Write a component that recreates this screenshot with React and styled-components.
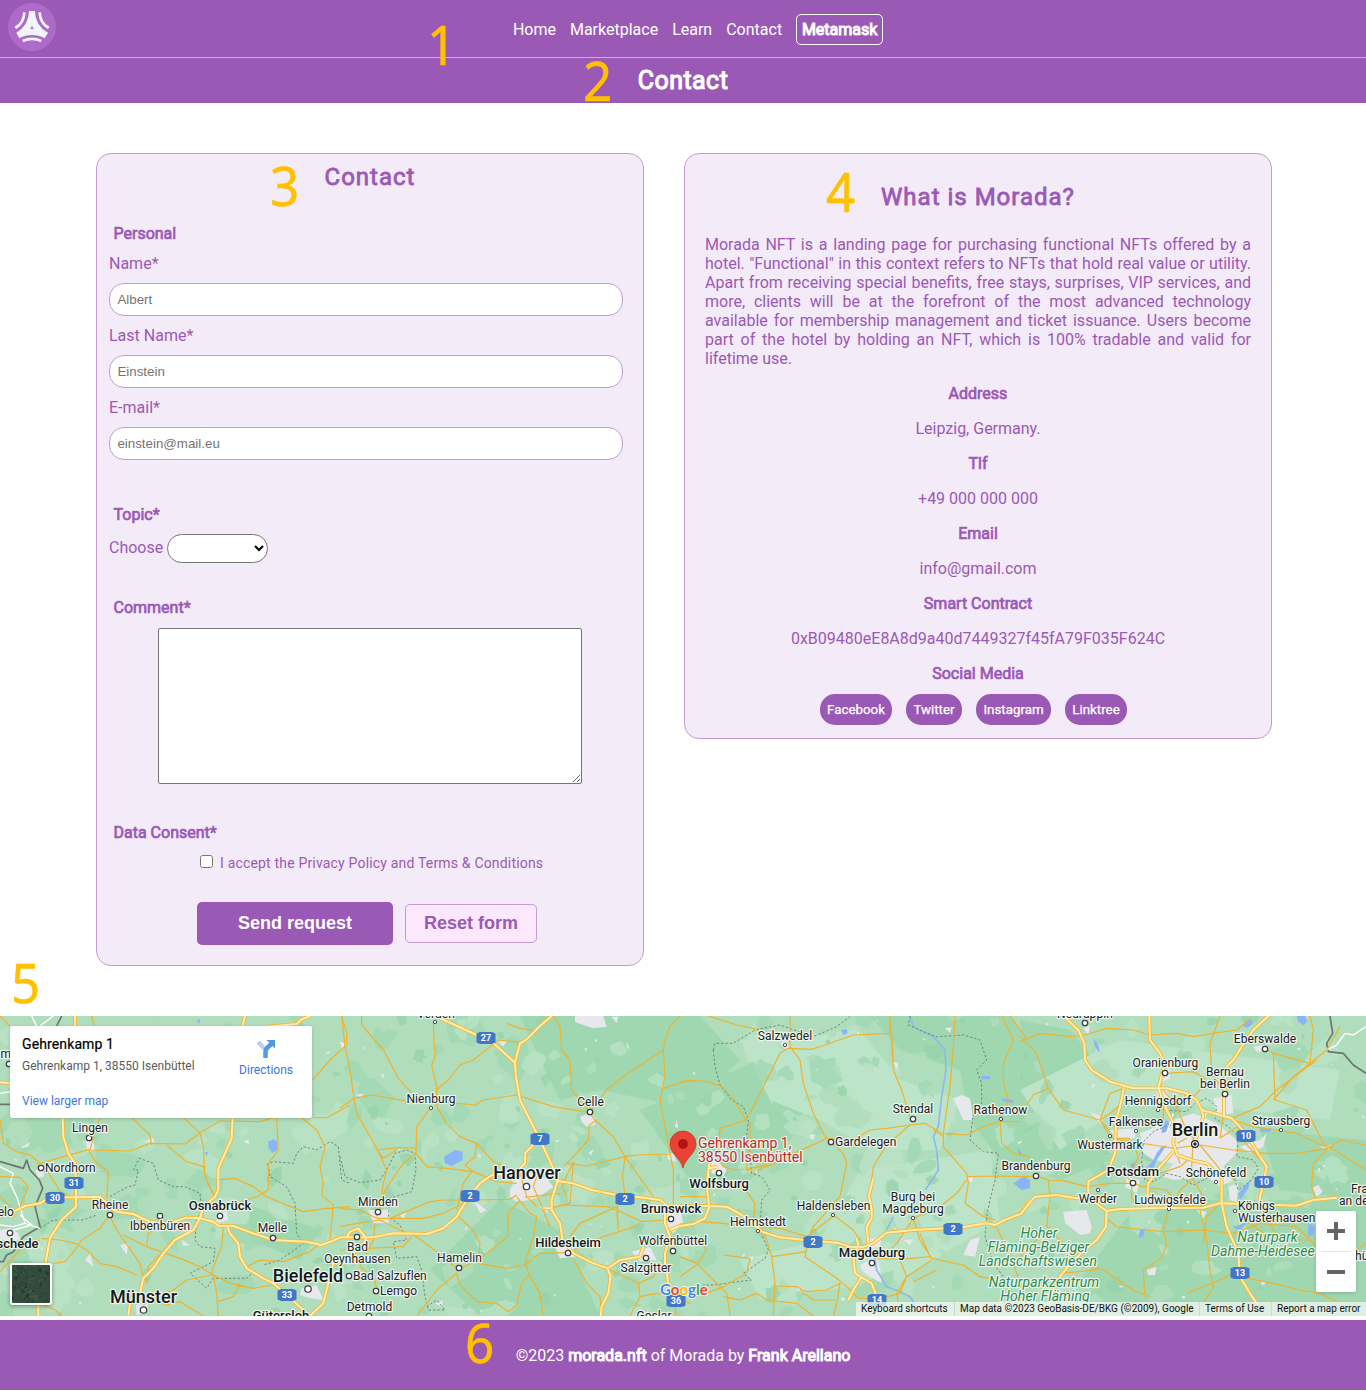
import React from 'react';
import styled, { createGlobalStyle, css } from 'styled-components';

const PURPLE = '#9b59b6';
const LILAC = '#c39bd9';
const PANEL = '#f3ebf7';

const GlobalStyle = createGlobalStyle`
  * { box-sizing: border-box; }
  body {
    margin: 0;
    background: #fff;
    font-family: Roboto, "Liberation Sans", sans-serif;
    font-size: 16px;
    line-height: 19px;
    color: ${PURPLE};
  }
  a { color: inherit; text-decoration: none; }
  h1, h2, h3, p { margin: 0; }
`;

const heavy = css`
  font-weight: 400;
  -webkit-text-stroke: 0.7px currentColor;
`;

const Page = styled.div`
  position: relative;
  width: 1366px;
  height: 1391px;
  overflow: hidden;
`;

const Header = styled.header`
  display: flex;
  align-items: flex-start;
  height: 58px;
  padding: 0 26px 0 8px;
  background: ${PURPLE};
  border-bottom: 1px solid #d2a8e4;
`;

const Logo = styled.svg`
  display: block;
  width: 48px;
  height: 48px;
  margin-top: 3px;
`;

const Nav = styled.nav`
  flex: 1;
  display: flex;
  justify-content: center;
  align-items: center;
  gap: 14px;
  height: 59px;
  color: #fff;
`;

const WalletLink = styled.a`
  ${heavy}
  -webkit-text-stroke-width: 1px;
  width: 87px;
  height: 31px;
  padding: 5px 0;
  border: 1px solid #fff;
  border-radius: 5px;
  text-align: center;
`;

const TitleBar = styled.div`
  display: flex;
  justify-content: center;
  height: 45px;
  padding-top: 9px;
  background: ${PURPLE};
  color: #fff;
`;

const PageTitle = styled.h1`
  ${heavy}
  -webkit-text-stroke-width: 1.1px;
  font-size: 25px;
  line-height: 28px;
  letter-spacing: 0.45px;
`;

const Content = styled.main`
  display: flex;
  align-items: flex-start;
  gap: 40px;
  height: 913px;
  padding: 50px 94px 0 96px;
`;

const Card = styled.section`
  width: ${(p) => p.$width}px;
  height: ${(p) => p.$height}px;
  padding: ${(p) => p.$pad};
  background: ${PANEL};
  border: 1px solid ${LILAC};
  border-radius: 15px;
`;

const CardTitle = styled.h2`
  ${heavy}
  -webkit-text-stroke-width: 0.8px;
  font-size: 24px;
  line-height: 28px;
  letter-spacing: 1px;
  text-align: center;
`;

const Group = styled.div`
  margin-top: ${(p) => p.$top}px;
`;

const GroupTitle = styled.h3`
  ${heavy}
  margin-left: 4.5px;
  font-size: 16px;
`;

const Label = styled.label`
  display: block;
  margin-top: ${(p) => p.$top || 10}px;
`;

const TextInput = styled.input`
  display: block;
  width: 514px;
  height: 33px;
  margin-top: 10px;
  padding: 0 7.4px;
  border: 1px solid ${LILAC};
  border-radius: 15px;
  background: #fff;
  font: 13.333px "Liberation Sans", Arial, sans-serif;
  &::placeholder { color: #757575; }
`;

const TopicRow = styled.div`
  display: flex;
  align-items: flex-start;
  gap: 4px;
  margin-top: 10px;
  label { margin-top: 4px; }
`;

const TopicSelect = styled.select`
  width: 101px;
  height: 29px;
  border: 1px solid #767676;
  border-radius: 15px;
  background: #fff;
  color: #000;
`;

const CommentBox = styled.textarea`
  display: block;
  width: 424px;
  height: 156px;
  margin: 11px 0 0 49px;
  border: 1px solid #767676;
  border-radius: 2px;
  background: #fff;
`;

const Consent = styled.label`
  display: flex;
  align-items: flex-start;
  gap: 7px;
  height: 18px;
  margin: 12px 0 0 91px;
  font-size: 14px;
  letter-spacing: 0.18px;
  input { width: 13px; height: 13px; margin: 1px 0 0; }
`;

const Actions = styled.div`
  display: flex;
  align-items: center;
  gap: 12px;
  margin: 30px 0 0 88px;
`;

const FormButton = styled.button`
  width: ${(p) => (p.$primary ? 196 : 132)}px;
  height: ${(p) => (p.$primary ? 43 : 39)}px;
  padding: 0 0 1px;
  border: ${(p) => (p.$primary ? '0' : `1px solid ${LILAC}`)};
  border-radius: 5px;
  background: ${(p) => (p.$primary ? PURPLE : '#fbe8fd')};
  color: ${(p) => (p.$primary ? '#fff' : PURPLE)};
  font: bold 18px "Liberation Sans", Arial, sans-serif;
`;

const About = styled.p`
  margin-top: 24px;
  text-align: justify;
`;

const Detail = styled.p`
  margin-top: 16px;
  text-align: center;
  ${(p) => p.$strong && heavy}
`;

const Socials = styled.div`
  display: flex;
  justify-content: center;
  gap: 14px;
  margin-top: 11px;
  padding-right: 9px;
`;

const SocialLink = styled.a`
  width: ${(p) => p.$width}px;
  height: 31px;
  border-radius: 15px;
  background: ${PURPLE};
  color: #fff;
  font-size: 13.33px;
  font-weight: 400;
  -webkit-text-stroke: 0.25px #fff;
  line-height: 31px;
  text-align: center;
`;

const Marker = styled.span`
  position: absolute;
  left: ${(p) => p.$x}px;
  top: ${(p) => p.$y}px;
  font-family: "Noto Sans", "Open Sans", sans-serif;
  font-size: 55px;
  line-height: 55px;
  color: #ffc000;
  transform: scaleX(0.93);
  -webkit-text-stroke: 0.5px #ffc000;
`;

const MapFrame = styled.section`
  position: relative;
  height: 300px;
  margin-bottom: 4px;
  overflow: hidden;
`;

const MapDrawing = styled.svg`
  display: block;
  width: 1366px;
  height: 300px;
  font-family: Roboto, sans-serif;
`;

const PlaceCard = styled.div`
  position: absolute;
  left: 10px;
  top: 10px;
  display: flex;
  justify-content: space-between;
  width: 302px;
  height: 92px;
  padding: 10px 19px 9px 12px;
  background: #fff;
  border-radius: 2px;
  box-shadow: 0 1px 4px -1px rgba(0, 0, 0, 0.3);
  font-size: 12px;
  line-height: 16px;
`;

const PlaceText = styled.div`
  display: flex;
  flex-direction: column;
`;

const PlaceName = styled.div`
  color: #000;
  font-size: 14px;
  font-weight: 400;
  letter-spacing: 0.12px;
  -webkit-text-stroke: 0.2px #000;
`;

const PlaceAddress = styled.div`
  margin-top: 6px;
  color: #5b5b5b;
`;

const MapLink = styled.a`
  margin-top: ${(p) => p.$top}px;
  color: #3a76e0;
`;

const Directions = styled.div`
  display: flex;
  flex-direction: column;
  align-items: center;
  padding-top: 3px;
`;

const LayerThumb = styled.div`
  position: absolute;
  left: 10px;
  top: 247px;
  width: 42px;
  height: 42px;
  border: 2px solid #fff;
  border-radius: 3px;
  box-shadow: 0 1px 4px rgba(0, 0, 0, 0.4);
  overflow: hidden;
  svg { display: block; }
`;

const ZoomControl = styled.div`
  position: absolute;
  left: 1316px;
  top: 195px;
  width: 40px;
  height: 81px;
  border-radius: 2px;
  background: #fff;
  box-shadow: 0 1px 4px -1px rgba(0, 0, 0, 0.3);
`;

const Credits = styled.div`
  position: absolute;
  right: 0;
  bottom: 0;
  display: flex;
  height: 14px;
  background: rgba(240, 245, 241, 0.78);
  color: #111;
  font-size: 10px;
  line-height: 14px;
`;

const Credit = styled.span`
  width: ${(p) => p.$width}px;
  padding-left: 5px;
  white-space: nowrap;
  & + & { border-left: 1px solid #c8ddce; }
`;

const Footer = styled.footer`
  height: 70px;
  padding-top: 26px;
  background: ${PURPLE};
  color: #fff;
  text-align: center;
  strong { ${heavy} -webkit-text-stroke-width: 1px; }
`;

/* Deterministic generator for the woodland texture. */
const seeded = (seed) => () => {
  seed = (seed * 16807) % 2147483647;
  return seed / 2147483647;
};

const patches = (seed, count, min, max, region = [0, 1016, 1366, 1316]) => {
  const rnd = seeded(seed);
  let d = '';
  for (let i = 0; i < count; i++) {
    const cx = region[0] + rnd() * (region[2] - region[0]);
    const cy = region[1] + rnd() * (region[3] - region[1]);
    const size = min + rnd() * rnd() * (max - min);
    const flat = 0.45 + rnd() * 0.5;
    const tilt = rnd() * Math.PI;
    const n = 9 + Math.floor(rnd() * 6);
    for (let k = 0; k < n; k++) {
      const a = (k / n) * Math.PI * 2;
      const r = size * (0.6 + rnd() * 0.55);
      const px = Math.cos(a) * r;
      const py = Math.sin(a) * r * flat;
      const x = cx + px * Math.cos(tilt) - py * Math.sin(tilt);
      const y = cy + px * Math.sin(tilt) + py * Math.cos(tilt);
      d += `${k ? 'L' : 'M'}${x.toFixed(1)} ${y.toFixed(1)}`;
    }
    d += 'Z';
  }
  return d;
};

/* Four map sheets, each drawn at three times its final scale. */
const sheets = [
  {
    at: [0, 950],
    motorway:
      'M225 198V228M188 503L190 560L205 610L225 640L228 700V770L185 810L150 865L138 930V945M115 1065V1098M0 800L40 785L75 768L120 760L150 742H230L300 740L330 770L350 785L400 792L450 815L500 822L560 803L600 805L640 815L655 827L700 828L760 850L820 870L860 872L920 875L965 885L1000 872L1020 862L1050 860M735 198L728 228M698 503L695 565L675 610L655 655V720L645 740L610 770L600 805L580 840L525 870L490 910L460 955L430 985L420 1030L390 1060L385 1098M680 825L690 850L715 880L720 920L740 955L790 985L820 1000L860 1035L910 1080L925 1098M1050 925L1000 940L985 1000L970 1060L930 1098M800 230L890 222L905 208L930 198M0 397L35 400',
    road:
      'M0 198L30 228M275 198L282 228M1025 198L1040 250L1040 285L990 330L938 390M0 510L10 580L50 605L90 615L120 640L150 632L225 610L270 598L300 500M270 600L390 603L450 580L555 582L600 548L660 513L780 515L820 503M395 503L450 555L455 585M500 585L560 635L610 650L620 690L645 740M550 503L600 548L610 590L615 680L640 735M830 503L835 600L805 640V720L770 740L680 770M650 690L705 685L760 710L800 740L860 765L910 785L980 775L1050 770M905 503L950 540L975 590L960 650L970 700L965 735L1000 765L990 870M938 503L980 503L1050 465M110 640L140 660L185 730L230 745M265 600L290 640L325 665L320 745M0 680L60 682L85 710L60 770M320 780L350 840L385 890L420 940L430 985M125 865L180 870L225 880L260 900L300 940L350 950L410 975M160 940L195 935L225 900L245 870L300 835L325 800M370 855L440 890L540 925L600 950L640 975L650 1030L655 1098M440 890L445 850L500 812M670 830L665 890L640 950L635 975L560 990L520 1020L450 1050L430 1065M640 975L690 1000L760 1015L820 1005M130 1065L165 1080L185 1098M0 740L30 770L45 800M0 965L60 900L120 870M430 1040L500 1065L540 1055L610 1098M740 950L780 930L850 935L930 905L960 880M655 1055L700 1040L720 1000M520 870L445 950L440 1000',
    white:
      'M0 650L40 670L30 700L50 740L75 820L120 835M75 820L40 830L0 825M40 840L95 825L60 795M95 198L110 228M120 228L160 198M0 430L30 425',
    border: 'M185 198L170 228M0 463H30M0 635L70 655L80 630L90 660L118 690L128 715L105 770L120 830L70 860L40 905L20 915L10 935H0',
    limit:
      'M120 835L160 810H250L290 795M330 740L380 712L405 705L415 660L400 660L418 625L460 640L475 690L520 710L555 710L600 730L605 780L590 810L585 870L600 890L645 895L640 935L570 970L620 1015L640 985L740 985L765 960M800 645L820 635L880 640L890 610L910 590L950 600L990 575L1015 590L1025 690L1050 700M805 645L810 680L860 710L885 760L890 850L910 880L840 930L790 945',
    water: 'M805 575L820 568L832 575V600L818 608L806 595ZM612 608L625 605L620 618ZM590 210L600 208L598 222Z',
    town: 'M255 560L280 570L285 600L262 605ZM105 660L130 650L132 680L115 685ZM0 840L30 835L55 850L60 870H0ZM650 790L680 785L685 810L650 820ZM905 1015L950 1005L970 1050L930 1045L900 1035ZM408 1065L445 1060L440 1090L410 1095ZM60 595L90 575L85 590ZM430 575L460 565L465 578ZM730 575L745 568L748 583ZM360 885L385 880L380 915ZM545 870L570 885L550 888ZM270 910L280 950L255 930Z',
  },
  {
    at: [340, 1010],
    motorway:
      'M300 25L345 45L410 75L460 100L525 158M635 18L600 48L560 88L540 100L525 158L528 200L540 270L570 330L600 390L640 475L652 515L635 570V600L660 640L668 690L700 730L760 760L803 775L812 800L805 850L785 890L782 918M0 682H100L160 670L260 672L310 655L350 620L380 570L420 520L455 495L490 492M535 480L555 460V430L590 395M650 513L700 520L755 540L830 555L900 562L960 570L985 590L1050 588M803 775L840 750L900 740L910 710M975 600L975 640L990 680L975 730V760L985 820L1000 860M990 660L1025 645L1050 648M20 682L30 665L55 655L75 680L80 700M80 690L30 740L0 770M610 595H635',
    road:
      'M65 18V45L130 120L175 205L230 265M5 18L15 110L30 180L42 265L50 310L110 415L140 480L130 520L120 600M0 295L42 265L95 255L210 275L350 280L405 285L430 270L530 255L640 290L750 308M280 40L285 140L275 165L290 230V290M290 240L325 210L360 165L400 150L450 110L475 90L540 98M500 40L540 55L575 60L590 75M640 18L660 50L665 120L690 150L695 240L750 308L800 240L850 200L970 120L975 90L990 50L1020 18M970 120L975 200L960 270L975 350L990 430L1000 480V590M970 235L1050 210M290 290L320 340L360 380L410 400L460 455L540 490L560 560L590 590M275 290L230 350L228 430L260 470L320 475L400 485L470 515L530 520M228 415L180 412L110 420L130 445L170 420M228 430L190 460L135 540L110 620M0 595L60 600L110 625L250 625L310 610L370 580M150 625L270 575L310 570L360 570L510 568L530 555M750 310L765 330L820 380L855 440L940 560M770 330L748 345L745 390L700 440L670 470M700 455L690 580L630 595M680 460L740 468L855 440L890 435L990 432M855 440L848 500L855 560M590 500L580 530L610 600L630 650M555 562L660 550M530 560L570 610L590 620L580 680L555 760L570 800L600 850L610 918M540 570L505 610L503 680L415 750L360 775M350 615L400 660L420 700L415 760L500 775L555 765L600 730L680 728M0 650L50 640L120 630L180 660L230 680L290 725L350 775M0 720L80 715L190 710L215 680M230 918L290 840L350 790L360 825L410 875L470 880L505 905L530 885L545 820L570 790M630 600L660 585L800 590L830 600L835 660L830 560M830 600L905 635L970 630M690 680L720 640L830 590M700 720L790 680L900 645M700 745L740 820L780 860L785 918M810 780L895 820L900 860L870 918M895 820L940 800L970 760M395 485L370 520L350 600M410 400L405 440L375 465L400 485M900 860L950 850L1000 860L1050 880M1000 860L1010 918M105 640L100 690L60 770L100 800L115 850M680 555L665 530L700 455',
    white: '',
    border: '',
    limit:
      'M0 440L15 500L60 518L120 510L140 480L165 430L200 420L225 430L228 480L215 545L150 565L145 620L180 645L200 690L160 695L170 745L230 740L245 780L255 860L265 900L315 900L290 870L260 890',
    water: 'M312 440L345 420L368 425L368 450L335 468L315 460ZM135 335L145 342L138 344Z',
    town:
      'M510 540L530 500L580 490L620 505L640 530L600 560L570 570L530 575L510 560ZM600 590L625 588L622 610ZM720 320L748 310L768 325L765 345L740 350L725 335ZM705 18H790L800 50L760 55L730 45L705 35ZM975 600L1020 590L1030 640L1000 670L970 640ZM875 725L930 710L950 750L900 755ZM640 700L700 705L705 740L660 745ZM85 600L150 600L145 640L100 640ZM180 615L200 605L190 630ZM285 880L310 870L305 890ZM0 95L20 100L5 115ZM45 255L70 250L65 262ZM475 95L500 92L490 110ZM815 20L835 20L830 40ZM860 95L870 120L860 110ZM400 570L440 600L420 610ZM745 430L760 418L755 435ZM1010 330L1015 355L1005 350ZM980 430L1000 430L1010 455L985 450Z',
  },
  {
    at: [680, 1010],
    motorway:
      'M0 588H85L140 590L180 612L215 635L245 665L300 682L375 690L470 698L510 710L545 712L580 700L620 668L700 660L850 652L915 640L945 645L970 632L1020 612L1050 570M0 648L40 642L75 625L88 590L80 530L88 460M580 505L567 555L575 600L575 625L560 650L565 700M530 685L535 705L520 740L525 790L575 820L590 860V880M545 800L520 840L505 870M88 475L110 470',
    road:
      'M0 215L40 212L80 215L125 230L160 265L198 330L215 300L260 210L300 130L325 115L395 118L435 105L520 75L630 70V18M85 18L170 45L220 55L270 80L300 85M330 18V110L360 150L370 220L400 310L435 380L490 430L500 460L480 560L400 650L385 690L375 740L470 805L500 830L535 865L600 865L660 850L680 800L755 750M198 330L120 355L115 440L130 470L165 480L205 475L240 470L300 450L340 430L410 400L440 385L520 390L570 360L620 355L690 345L735 340L785 370L860 375L910 350L960 335H1020M630 18L640 180L665 240L690 320M635 70L640 155M825 18L820 110L810 230L790 370V410L860 490L865 520L855 580L910 620L945 630M965 18L1000 90L970 160V220L985 270L960 330L965 400L1000 430L1050 440M990 18L1040 85M690 345L620 405L580 470L575 510M860 500L950 498L1050 500M860 510L830 550L780 590L700 625L650 700L600 745M700 625L720 690L755 745L850 765L900 800L930 805M720 670L750 740L660 748L590 745M460 615L520 660L540 690M465 615L380 680L300 655L245 650M0 650L60 635L130 640L245 655L260 690L275 740L285 820L280 918M275 740L380 725M60 690L80 720L50 765L0 800M130 735L210 745L200 790L130 830L80 850M285 828L350 830L380 845L440 840L480 820L470 880L460 918M360 840L400 870L465 870M190 530L225 580L220 640M300 455L230 480L200 480L205 400M210 335V450M88 560H0M945 645L990 730L1010 790L1030 850M660 750L680 800L650 850L655 880M130 860L180 870L230 850L260 870L350 880L400 918M700 815L770 780M790 380L760 360M0 740L50 760L140 850L150 918',
    white: '',
    border: '',
    limit:
      'M100 120L105 100L160 100L225 60L300 45L400 80L470 50L510 20M100 120L105 170L120 225L155 270L190 290L205 330L200 380L210 430L215 490L245 500L270 540L245 570L240 660L265 720L255 745L190 790L215 810L100 825H70M690 18L685 45L730 65L770 80L850 75L900 90L920 150L890 180L905 220L905 300L880 310L870 390L910 425L955 430L945 510L930 570L920 620L915 680L940 760L970 800',
    water:
      'M485 60L500 58L503 70L488 75ZM905 198H930V208H905ZM965 265L1000 270L995 278L968 274ZM1000 520L1030 500L1050 510V535L1025 540ZM1010 410L1025 430L1020 440Z',
    town:
      'M820 265L845 255L870 265L880 330L850 330ZM540 765L590 740L600 770L605 820L570 800L545 780ZM90 460L110 450L140 480L130 500L95 490ZM560 690L605 680L600 710L570 715ZM870 690L900 680L885 740L850 735ZM640 155L655 160L650 180ZM670 690L700 688L690 705ZM200 742L220 738L218 750ZM350 835L375 835L365 850ZM220 480L235 475L230 490ZM795 55L815 52L810 68ZM225 655L245 650L245 670ZM860 505L880 500L875 520ZM300 100L315 90L330 110L315 118Z',
    river:
      'M690 18L700 50L760 80L795 120L798 180L785 260L775 350L760 380L770 420L775 480L750 520L735 540M640 620L620 660M580 720L590 780L620 830L660 845L690 860L710 890',
  },
  {
    at: [1020, 1010],
    motorway:
      'M130 18L175 60L193 100L195 150L215 180L270 215L340 235L440 235L500 250L530 270L545 300L600 315L635 325L655 345L690 390L720 440L740 470L730 520L720 560L718 582M0 615L20 590L45 560L110 555L170 565L205 560L235 585L260 603L300 597L380 595L550 593L600 580L700 583L830 587L880 570L950 563M312 232L300 290L288 330L285 430L265 480L205 515V560M260 603L258 650L230 690L160 750L120 800L90 860M605 500L605 580L620 650L655 730L660 800L690 850L710 880M745 18L700 60L665 110L640 150L620 170L612 260V315M388 18L390 90L420 130L435 160L415 235L440 300L465 350L460 400L472 435L520 452L560 460L600 500M545 300L550 320L535 370L520 400M460 425L420 470L385 520L380 590',
    road:
      'M0 95L60 70L150 80L195 75M0 80L50 130L85 235L130 300L240 330L270 310L300 285M85 235L40 255L0 315M195 75L260 55L340 60L390 75L470 70L520 80L580 70L650 60L690 30M240 330L270 380L285 388L400 405L460 415L540 405L640 420L740 430L830 430L925 415L960 390L1038 405M270 365L240 330L270 250L310 235M435 190L520 185L555 205L540 240L520 260M600 18L570 100L575 190L615 250M730 115L760 130L870 160L920 120L960 50M760 130L765 270L860 300L910 400L1038 480M925 415L880 460L875 530L890 570M635 325L720 290L770 240L890 150M640 330L700 350L830 370L925 415M600 385L660 345M540 405L610 490L650 510M285 385L330 385M472 400L500 385M470 430L480 460M470 290L490 340L520 385L515 470L520 510L550 560L540 600M430 260L430 340M420 490L480 470L510 445M340 520L370 530L440 540L465 570L460 590M340 520L310 490L270 490M335 520V560L350 595M0 500L50 498L85 510L130 512L200 530L270 520L335 520M85 510L90 560L80 650L120 690L150 720L170 760L250 780L340 840L390 860M445 600L430 660L440 700L425 745L370 780L375 860M260 625L290 650L380 660L430 665L550 660L640 670L720 640L830 650L900 720L980 740L1038 700M540 600L560 690L570 780L580 830L550 880M720 590L760 660L780 690L870 690M590 590L560 620L550 700M660 800L760 820L840 840L900 850L960 880M660 780L600 810L500 850M870 18L880 60L870 160L820 200L760 270M610 315L600 385M340 400L355 440L330 500M0 740L60 680L90 650M120 790L230 780M500 250L470 290L430 240M520 505L480 540L465 580M650 330L660 380L720 450M660 620L690 640L770 700',
    white: 'M1038 50L1000 75L975 70L950 105L920 120M460 310L440 370M560 300L540 380',
    border: 'M930 18L938 70L920 100L925 125L970 130L1000 165L1038 190',
    limit:
      'M370 395L400 365L455 340L440 300L500 305L525 280L560 265L590 290L585 325L625 350L655 380L650 440L700 450L715 475L690 515L655 540L640 500L600 480L560 505L520 525L480 500L440 490L400 515L375 510L365 460L370 395',
    water:
      'M0 505L20 500L25 520L5 540ZM375 480L400 450L410 430L425 410L440 405L410 450L395 485ZM425 350L440 330L455 345L440 365L425 370ZM720 355H755L750 365H722ZM665 45L690 25L700 40L680 55ZM830 18H855L862 35L850 45L835 35ZM865 640L885 650L880 675L865 680ZM220 85L235 105L240 130L225 110ZM655 550L690 510L685 535L660 570ZM635 650L660 645L690 630L660 660ZM360 660L375 655L370 680L355 685ZM330 465L345 455L338 480Z',
    town:
      'M360 370L460 330L520 310L590 340L650 390L650 430L610 470L640 510L600 530L560 500L460 510L430 500L460 460L400 450L370 430ZM130 605L200 600L215 650L210 670L180 675L150 650L135 640ZM580 265L635 255L640 310L590 315ZM410 240L440 240L450 265L415 290ZM430 175L450 180L450 205L425 215ZM380 780L410 770L405 795L385 795ZM875 535L895 525L908 545L890 560ZM625 530L655 520L650 575L630 570ZM700 110L730 105L735 125L710 125ZM660 410L720 390L740 370L730 410L690 430ZM320 500L360 510L350 550L315 530ZM530 600L560 605L550 625ZM270 360L350 355L345 385L290 390ZM900 410L935 405L925 420ZM190 55L210 45L205 75ZM210 305L245 320L250 350Z',
  },
];

/* text, x, baseline, style key, anchor */
const labels = [
  ['Verden', 436, 1017.5], ['Salzwedel', 785, 1040], ['Neuruppin', 1085, 1018], ['Eberswalde', 1265, 1043],
  ['Oranienburg', 1165.5, 1067], ['Bernau', 1225, 1076], ['bei Berlin', 1225, 1088], ['Nienburg', 431, 1103],
  ['Celle', 590.5, 1106], ['Stendal', 913, 1113], ['Rathenow', 1000.5, 1114], ['Hennigsdorf', 1158, 1105],
  ['Falkensee', 1136, 1126], ['Strausberg', 1281, 1125], ['Wustermark', 1110, 1149], ['Lingen', 90, 1132],
  ['Nordhorn', 45, 1172, 's', 'start'], ['Gardelegen', 835, 1146, 's', 'start'], ['Brandenburg', 1036, 1170],
  ['Schönefeld', 1216, 1177], ['Potsdam', 1133, 1176, 'm'], ['Werder', 1098, 1203], ['Ludwigsfelde', 1170, 1204],
  ['Königs', 1238, 1209.5, 's', 'start'], ['Wusterhausen', 1238, 1221.5, 's', 'start'], ['Burg bei', 913, 1201],
  ['Magdeburg', 913, 1213], ['Haldensleben', 833.5, 1210], ['Helmstedt', 758, 1226], ['Magdeburg', 872, 1256.5, 'm'],
  ['Wolfsburg', 719, 1187.5, 'm'], ['Brunswick', 671, 1212.5, 'm'], ['Wolfenbüttel', 673, 1245], ['Hildesheim', 568, 1246.5, 'm'],
  ['Salzgitter', 646, 1272], ['Hamelin', 459.5, 1262], ['Minden', 378, 1206], ['Bad', 357.5, 1251], ['Oeynhausen', 357.5, 1263],
  ['Bad Salzuflen', 353, 1280, 's', 'start'], ['Lemgo', 380, 1295, 's', 'start'], ['Detmold', 369.5, 1311], ['Rheine', 110, 1209],
  ['Ibbenbüren', 160, 1230], ['Osnabrück', 220, 1209.5, 'm'], ['Melle', 272.5, 1232], ['Gütersloh', 281, 1320, 'm'],
  ['Goslar', 654, 1319.5], ['Enschede', 38.5, 1247.5, 'm', 'end'], ['Almelo', 14, 1216, 's', 'end'], ['Emm', 11, 1058, 's', 'end'],
  ['Frankfurt', 1351, 1193, 's', 'start'], ['an der Oder', 1339, 1205, 's', 'start'], ['hüben', 1355, 1260, 's', 'start'],
  ['Hanover', 527, 1179, 'l'], ['Berlin', 1195, 1136, 'l'], ['Münster', 143.5, 1303, 'l'], ['Bielefeld', 308, 1282, 'l'],
  ['Hoher', 1039, 1238, 'n'], ['Fläming-Belziger', 1038.5, 1252, 'n'], ['Landschaftswiesen', 1038, 1266, 'n'],
  ['Naturparkzentrum', 1044, 1287, 'n'], ['Hoher Fläming', 1045, 1301, 'n'], ['Naturpark', 1267.5, 1242, 'n'],
  ['Dahme-Heidesee', 1211, 1256, 'n', 'start'],
];

const labelLook = {
  s: { fontSize: 12, fill: '#202124', letterSpacing: 0.06 },
  m: { fontSize: 13, fill: '#17181a', fontWeight: 500, letterSpacing: 0 },
  l: { fontSize: 18, fill: '#17181a', fontWeight: 500, letterSpacing: 0 },
  n: { fontSize: 14, fill: '#2f8a4c', fontStyle: 'italic', letterSpacing: 0.05 },
};

const dots = [
  [435, 1022, 2], [785, 1045, 2], [1085, 1023, 3], [1265, 1049, 3], [1165, 1073, 3], [1225, 1094, 3], [431, 1108, 2],
  [590, 1112, 3], [913, 1119, 3], [1001, 1119, 2], [1158, 1110, 2], [1136, 1131, 2], [1281, 1130, 2], [1110, 1136, 2],
  [89, 1138, 3], [41, 1168, 3], [831, 1142, 3], [1036, 1176, 3], [1216, 1182, 2], [1133, 1183, 3], [1098, 1190, 2],
  [1169, 1209, 2], [1235, 1211, 2], [913, 1218, 2], [833, 1215, 2], [758, 1231, 2], [872, 1263, 3], [719, 1173, 3],
  [671, 1219, 3], [673, 1251, 3], [568, 1253, 3], [646, 1258, 3], [459, 1268, 3], [378, 1212, 3], [357, 1237, 3],
  [349, 1276, 3], [376, 1291, 3], [369, 1316, 3], [110, 1215, 3], [160, 1216, 3], [220, 1216, 3], [273, 1238, 3],
  [308, 1289, 3.5], [143.5, 1310, 3.5], [526.5, 1186.5, 3.5], [10, 1233, 3], [9, 1064, 3],
];

const shields = [
  [27, 486, 1038], [7, 540, 1139], [2, 470, 1196], [2, 625, 1199], [36, 676, 1301], [2, 813, 1242], [2, 953, 1229],
  [14, 877, 1300], [10, 1246, 1136], [10, 1264, 1182], [13, 1240, 1273], [31, 74, 1183], [30, 55, 1198], [33, 287, 1295],
];

const googleLetters = [['G', '#4285f4'], ['o', '#ea4335'], ['o', '#fbbc05'], ['g', '#4285f4'], ['l', '#34a853'], ['e', '#ea4335']];

function RegionMap() {
  return (
    <MapDrawing viewBox="0 1016 1366 300">
      <rect x="0" y="1016" width="1366" height="300" fill="#b0ddbc" />
      <path
        fill="#9fd7b1"
        d="M520 1016H700L740 1060L690 1110L650 1100L600 1090L560 1100L540 1060ZM870 1016H1010L1040 1060L1060 1120L1110 1160L1060 1180L1000 1160L970 1120L960 1070L900 1050ZM640 1110L760 1060L820 1100L800 1130L740 1190L690 1180ZM1140 1200H1366V1316H1120L1080 1280ZM1020 1020L1070 1030L1110 1080L1060 1130L1030 1090ZM1260 1130L1366 1140V1200L1280 1190ZM500 1200L560 1230L600 1316H480L430 1270ZM250 1205L320 1230L300 1260L250 1240Z"
      />
      <path fill="#bce4c8" d="M740 1040L860 1030L900 1080L960 1100L940 1150L870 1150L820 1120L770 1100ZM860 1170L990 1150L1000 1220L900 1280L760 1300L740 1260L820 1240ZM1020 1090L1120 1040L1340 1070L1330 1120L1240 1110L1130 1100L1060 1150Z" />
      <path d={patches(91, 170, 6, 34)} fill="#9fd7b1" opacity="0.75" />
      <path d={patches(417, 130, 6, 30)} fill="#bde4c9" opacity="0.7" />
      <path d={patches(5209, 110, 5, 22)} fill="#b0ddbc" opacity="0.85" />
      <path d={patches(733, 110, 3, 13)} fill="#96d1a9" opacity="0.75" />
      <path d={patches(6011, 70, 1.2, 3.6)} fill="#e2e7e7" />
      {sheets.map((s) => (
        <g key={s.at[0]} transform={`translate(${s.at[0]} ${s.at[1]}) scale(0.33333)`} fill="none" strokeLinejoin="round">
          <path d={s.town} fill="#e6e8ec" />
          <path d={s.water} fill="#8ab4f8" />
          {s.river && <path d={s.river} stroke="#8db9ee" strokeWidth="5" />}
          <path d={s.limit} stroke="#72857a" strokeWidth="3" strokeDasharray="7 6" />
          <path d={s.border} stroke="#6b7672" strokeWidth="5" />
          <path d={s.white} stroke="#fff" strokeWidth="4" />
          <path d={s.road} stroke="#efb32e" strokeWidth="3.6" />
          <path d={s.motorway} stroke="#f3b93a" strokeWidth="11.5" />
          <path d={s.motorway} stroke="#ffedad" strokeWidth="6" />
        </g>
      ))}
      {shields.map(([n, x, y]) => (
        <g key={`${n}-${x}`}>
          <path d={`M${x - 6} ${y - 6}H${x + 6}L${x + 9.5} ${y - 4.5}V${y + 4.5}L${x + 6} ${y + 6}H${x - 6}L${x - 9.5} ${y + 4.5}V${y - 4.5}Z`} fill="#4077c9" />
          <text x={x} y={y + 3.2} fontSize="9" fontWeight="700" fill="#fff" textAnchor="middle">{n}</text>
        </g>
      ))}
      {dots.map(([x, y, r]) => (
        <circle key={`${x}-${y}`} cx={x} cy={y} r={r - 0.3} fill="#fff" stroke="#3c4043" strokeWidth={r > 2 ? 1.3 : 0.9} />
      ))}
      <circle cx="1195" cy="1144" r="3.4" fill="#fff" stroke="#202124" strokeWidth="1.2" />
      <circle cx="1195" cy="1144" r="1.7" fill="#202124" />
      <g stroke="#ecf6ee" strokeWidth="2.4" strokeLinejoin="round" paintOrder="stroke">
        {labels.map(([text, x, y, look = 's', anchor = 'middle']) => (
          <text key={`${text}-${x}-${y}`} x={x} y={y + 0.4} textAnchor={anchor} {...labelLook[look]}>{text}</text>
        ))}
        <g fill="#b92a2a" fontSize="14">
          <text x="698" y="1148">Gehrenkamp 1,</text>
          <text x="698" y="1162">38550 Isenbüttel</text>
        </g>
        <text x="660" y="1294.5" fontFamily="Lato" fontSize="15" fontWeight="700" strokeWidth="2">
          {googleLetters.map(([c, fill], i) => <tspan key={i} fill={fill}>{c}</tspan>)}
        </text>
      </g>
      <path d="M683 1168C681 1158 670 1154 670 1144A13 13 0 0 1 696 1144C696 1154 685 1158 683 1168Z" fill="#ea4335" stroke="#c5372c" strokeWidth="0.8" />
      <circle cx="683" cy="1144" r="5" fill="#b31412" />
    </MapDrawing>
  );
}

function LogoMark() {
  return (
    <Logo viewBox="24 9 144 144">
      <circle cx="96" cy="81" r="72" fill="#ae6ac9" />
      <path fill="#f1f6fa" fillRule="evenodd" d="M87 33H105C106 62 119 84 144 98L134 115C110 102 82 102 58 115L49 98C73 84 86 62 87 33ZM96 77L91 87H101Z" />
      <path fill="none" stroke="#f1f6fa" strokeWidth="8" d="M73 37C72 60 62 75 46 84M119 37C120 60 130 75 146 84M68 123C86 115 106 115 124 123" />
    </Logo>
  );
}

const fields = [['Name*', 'Albert'], ['Last Name*', 'Einstein'], ['E-mail*', 'einstein@mail.eu']];

const details = [
  ['Address', 'Leipzig, Germany.'],
  ['Tlf', '+49 000 000 000'],
  ['Email', 'info@gmail.com'],
  ['Smart Contract', '0xB09480eE8A8d9a40d7449327f45fA79F035F624C'],
];

const socials = [['Facebook', 72], ['Twitter', 56], ['Instagram', 75], ['Linktree', 62]];

const markers = [[426, 16], [582, 52], [269, 157], [825, 163], [10, 954], [464, 1314]];

export default function App() {
  return (
    <Page>
      <GlobalStyle />
      <Header>
        <LogoMark />
        <Nav>
          <a>Home</a>
          <a>Marketplace</a>
          <a>Learn</a>
          <a>Contact</a>
          <WalletLink>Metamask</WalletLink>
        </Nav>
      </Header>
      <TitleBar><PageTitle>Contact</PageTitle></TitleBar>

      <Content>
        <Card as="form" $width={548} $height={813} $pad="9px 12px">
          <CardTitle>Contact</CardTitle>
          <Group $top={33}>
            <GroupTitle>Personal</GroupTitle>
            {fields.map(([label, placeholder], i) => (
              <Label key={label} $top={i ? 10 : 11}>
                {label}
                <TextInput placeholder={placeholder} />
              </Label>
            ))}
          </Group>
          <Group $top={45}>
            <GroupTitle>Topic*</GroupTitle>
            <TopicRow>
              <Label>Choose</Label>
              <TopicSelect><option /></TopicSelect>
            </TopicRow>
          </Group>
          <Group $top={35}>
            <GroupTitle>Comment*</GroupTitle>
            <CommentBox />
          </Group>
          <Group $top={39}>
            <GroupTitle>Data Consent*</GroupTitle>
            <Consent>
              <input type="checkbox" />
              I accept the Privacy Policy and Terms &amp; Conditions
            </Consent>
          </Group>
          <Actions>
            <FormButton type="button" $primary>Send request</FormButton>
            <FormButton type="button">Reset form</FormButton>
          </Actions>
        </Card>

        <Card $width={588} $height={586} $pad="29px 20px">
          <CardTitle>What is Morada?</CardTitle>
          <About>
            Morada NFT is a landing page for purchasing functional NFTs offered by a hotel. "Functional" in this
            context refers to NFTs that hold real value or utility. Apart from receiving special benefits, free
            stays, surprises, VIP services, and more, clients will be at the forefront of the most advanced
            technology available for membership management and ticket issuance. Users become part of the hotel by
            holding an NFT, which is 100% tradable and valid for lifetime use.
          </About>
          {details.map(([title, value]) => (
            <React.Fragment key={title}>
              <Detail $strong>{title}</Detail>
              <Detail>{value}</Detail>
            </React.Fragment>
          ))}
          <Detail $strong>Social Media</Detail>
          <Socials>
            {socials.map(([name, width]) => <SocialLink key={name} $width={width}>{name}</SocialLink>)}
          </Socials>
        </Card>
      </Content>

      <MapFrame>
        <RegionMap />
        <PlaceCard>
          <PlaceText>
            <PlaceName>Gehrenkamp 1</PlaceName>
            <PlaceAddress>Gehrenkamp 1, 38550 Isenbüttel</PlaceAddress>
            <MapLink $top={19}>View larger map</MapLink>
          </PlaceText>
          <Directions>
            <svg width="20" height="20" viewBox="0 0 20 20">
              <path d="M2 3L9 10" stroke="#b7d2f3" strokeWidth="4.5" />
              <path d="M9.500 19V13Q9.500 10 12 8L16 4.500" fill="none" stroke="#5598e3" strokeWidth="4.500" />
              <path d="M10.500 1H19V9.500Z" fill="#5598e3" />
            </svg>
            <MapLink $top={3}>Directions</MapLink>
          </Directions>
        </PlaceCard>
        <LayerThumb>
          <svg width="38" height="38" viewBox="0 0 38 38">
            <rect width="38" height="38" fill="#334b3b" />
            <path d={patches(77, 70, 0.8, 4, [0, 0, 38, 38])} fill="#3e5844" />
            <path d={patches(303, 60, 0.6, 3, [0, 0, 38, 38])} fill="#26392f" />
          </svg>
        </LayerThumb>
        <ZoomControl>
          <svg width="40" height="81" viewBox="0 0 40 81">
            <path d="M11 20H29M20 11V29M11 61H29" stroke="#666" strokeWidth="4" />
            <path d="M5 40.500H35" stroke="#e6e6e6" />
          </svg>
        </ZoomControl>
        <Credits>
          <Credit $width={98}>Keyboard shortcuts</Credit>
          <Credit $width={245}>Map data ©2023 GeoBasis-DE/BKG (©2009), Google</Credit>
          <Credit $width={72}>Terms of Use</Credit>
          <Credit $width={95}>Report a map error</Credit>
        </Credits>
      </MapFrame>

      <Footer>©2023 <strong>morada.nft</strong> of Morada by <strong>Frank Arellano</strong></Footer>

      {markers.map(([x, y], i) => <Marker key={i} $x={x} $y={y}>{i + 1}</Marker>)}
    </Page>
  );
}
